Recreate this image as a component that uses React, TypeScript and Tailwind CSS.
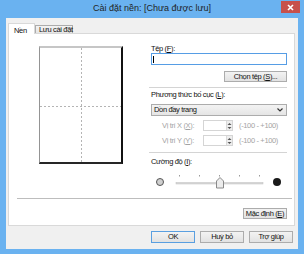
import React from "react";

function Btn({ children, className }: { children: React.ReactNode; className: string }) {
  return (
    <div
      className={
        "flex items-center justify-center border bg-linear-to-b from-[#f3f3f3] to-[#e2e2e2] " + className
      }
    >
      {children}
    </div>
  );
}

function U({ c }: { c: string }) {
  return <span className="underline underline-offset-[1px]">{c}</span>;
}

function Spin() {
  return (
    <div className="w-[30px] h-[11px] border border-[#d5d5d5] bg-white flex justify-end">
      <div className="w-[6px] h-full bg-[#eeeeee] border-l border-[#dadada] flex items-center justify-center">
        <svg width="5" height="8" viewBox="0 0 5 8">
          <path d="M2.5 1 L4.5 3 L0.5 3 Z" fill="#555" />
          <path d="M0.5 5 L4.5 5 L2.5 7 Z" fill="#555" />
        </svg>
      </div>
    </div>
  );
}

export default function App() {
  return (
    <div className="w-[304px] h-[254px] bg-[#6ab2f0] flex flex-col px-[6px] pb-[5px] relative font-['Liberation_Sans',Arial,sans-serif] text-[#111] whitespace-nowrap">
      <div className="h-[18px] flex items-center justify-center text-[9px] leading-none text-[#1f1f1f] pb-[1px]">
        Cài đặt nền: [Chưa được lưu]
      </div>
      <div className="absolute top-[1px] right-[4px] w-[19px] h-[12px] bg-[#c7504b] flex items-center justify-center">
        <svg width="7" height="7" viewBox="0 0 7 7">
          <path d="M1 1L6 6M6 1L1 6" stroke="#fff" strokeWidth="1.6" />
        </svg>
      </div>

      <div className="flex-1 bg-[#f0f0f0] flex flex-col pl-[2px] pr-[3px] text-[7.5px] tracking-[-0.35px] leading-[8px]">
        {/* tabs */}
        <div className="h-[15px] pt-[5px] flex items-end">
          <div className="relative z-10 -mb-px h-[11px] w-[27px] bg-white border border-b-0 border-[#d9d9d9] pl-[5px] pt-[3px]">
            Nền
          </div>
          <div className="h-[8px] w-[38px] border border-b-0 border-[#acacac] bg-linear-to-b from-[#f3f3f3] to-[#e5e5e5] pl-[3px]">
            Lưu cài đặt
          </div>
        </div>

        {/* panel */}
        <div className="h-[193px] bg-white border border-[#d9d9d9] flex flex-col">
          <div className="h-[164px] flex">
            <div className="w-[140px] pl-[30px] pt-[12px]">
              <div className="w-[84px] h-[118px] bg-white border-t-2 border-t-[#c6c6c6] border-l border-l-[#949494] border-r-2 border-r-[#111] border-b-2 border-b-[#262626]">
                <svg width="81" height="114" viewBox="0 0 81 114" className="block">
                  <line x1="41.5" y1="0" x2="41.5" y2="114" stroke="#b4b4b4" strokeWidth="1" strokeDasharray="2 2" />
                  <line x1="0" y1="58.5" x2="81" y2="58.5" stroke="#b4b4b4" strokeWidth="1" strokeDasharray="2 2" />
                </svg>
              </div>
            </div>

            <div className="w-[138px] flex flex-col pt-[11px]">
              <div className="h-[8px] pl-[2px]">
                Tệp (<U c="F" />):
              </div>
              <div className="ml-[2px] w-[136px] h-[12px] border border-[#569de5] bg-white flex items-center pl-[1px]">
                <div className="w-px h-[7px] bg-black" />
              </div>
              <Btn className="mt-[6px] self-end w-[63px] h-[11px] border-[#acacac]">
                Chọn tệp (<U c="S" />)...
              </Btn>
              <div className="mt-[5px] h-px bg-[#d4d4d4]" />
              <div className="mt-[3px] h-[8px] pl-[2px]">
                Phương thức bố cục (<U c="L" />):
              </div>
              <div className="mt-[5px] ml-[2px] w-[136px] h-[12px] border border-[#acacac] bg-linear-to-b from-[#f3f3f3] to-[#e5e5e5] flex items-center justify-between pl-[2px] pr-[3px]">
                <span>Dồn đầy trang</span>
                <svg width="6" height="4" viewBox="0 0 6 4">
                  <path d="M0.5 0.5 L3 3 L5.5 0.5" stroke="#333" strokeWidth="1.2" fill="none" />
                </svg>
              </div>
              <div className="mt-[4px] h-[11px] flex items-center text-[#a3a3a3]">
                <div className="ml-[13px] w-[41px]">
                  Vị trí X (<U c="X" />):
                </div>
                <Spin />
                <div className="ml-[6px]">(-100 - +100)</div>
              </div>
              <div className="mt-[4px] h-[11px] flex items-center text-[#a3a3a3]">
                <div className="ml-[13px] w-[41px]">
                  Vị trí Y (<U c="Y" />):
                </div>
                <Spin />
                <div className="ml-[6px]">(-100 - +100)</div>
              </div>
              <div className="mt-[6px] h-px bg-[#d4d4d4]" />
              <div className="mt-[5px] h-[8px] pl-[2px]">
                Cường độ (<U c="I" />):
              </div>
              <svg width="138" height="14" viewBox="0 0 138 14" className="mt-[9px] block">
                <circle cx="11" cy="7" r="3.5" fill="#cfcfcf" stroke="#555" strokeWidth="1" />
                {[30, 50, 70, 90, 110].map((x) => (
                  <line key={x} x1={x + 0.5} y1="0" x2={x + 0.5} y2="1.5" stroke="#9a9a9a" strokeWidth="1" />
                ))}
                <rect x="27" y="7.5" width="87" height="1.5" fill="#d6d6d6" stroke="#c0c0c0" strokeWidth="0.5" />
                <path d="M67.5 6 L71 2.5 L74.5 6 L74.5 13 L67.5 13 Z" fill="#ececec" stroke="#8a8a8a" strokeWidth="1" />
                <circle cx="128" cy="7" r="4" fill="#1a1a1a" />
              </svg>
            </div>
          </div>
          <div className="ml-[8px] mr-[2px] h-px bg-[#bdbdbd]" />
          <div className="mt-[9px] flex justify-end pr-[7px]">
            <Btn className="w-[44px] h-[11px] border-[#acacac]">
              Mặc định (<U c="E" />)
            </Btn>
          </div>
        </div>

        {/* bottom buttons */}
        <div className="mt-[5px] flex justify-end gap-[5px] pr-[2px]">
          <Btn className="w-[44px] h-[12px] border-[#5a9fe0]">OK</Btn>
          <Btn className="w-[44px] h-[12px] border-[#acacac]">Huỷ bỏ</Btn>
          <Btn className="w-[44px] h-[12px] border-[#acacac]">Trợ giúp</Btn>
        </div>
      </div>
    </div>
  );
}
